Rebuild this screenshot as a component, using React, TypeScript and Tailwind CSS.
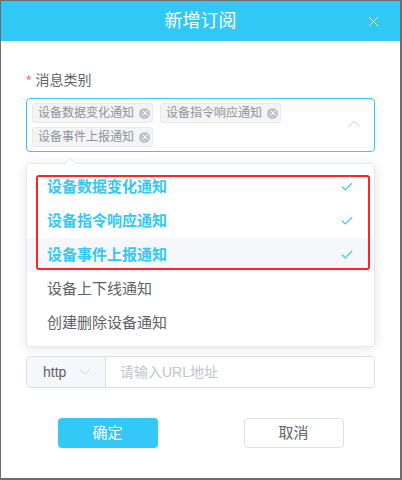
import { X, Check, ChevronUp, ChevronDown } from 'lucide-react';

const FONT = { fontFamily: '"Liberation Sans", "Noto Sans CJK SC", sans-serif' };

const tags = ['设备数据变化通知', '设备指令响应通知', '设备事件上报通知'];
const options = [
  { label: '设备数据变化通知', on: true },
  { label: '设备指令响应通知', on: true },
  { label: '设备事件上报通知', on: true, hover: true },
  { label: '设备上下线通知', on: false },
  { label: '创建删除设备通知', on: false },
];

function Tag({ text }: { text: string }) {
  return (
    <span className="flex h-[20px] items-center rounded-[3px] border border-[#e9e9eb] bg-[#f4f4f5] pl-[5px] pr-[2px] text-[12px] text-[#909399]">
      {text}
      <span className="ml-[5px] flex h-[11px] w-[11px] items-center justify-center rounded-full bg-[#c0c4cc]">
        <X size={8} strokeWidth={3} color="#ffffff" />
      </span>
    </span>
  );
}

export default function App() {
  return (
    <div className="h-[480px] w-[402px] bg-[#6d6d6d] pb-[2px] pl-px pr-[2px] pt-px" style={FONT}>
      <div className="flex h-full flex-col bg-white">
        <div className="relative flex h-10 items-center justify-center bg-[#32c8f6] text-[18px] text-white">
          新增订阅
          <X size={17} strokeWidth={1.4} className="absolute right-[18px] top-[12px]" />
        </div>

        <div className="px-[25px] pt-[29px]">
          <div className="flex h-5 items-center text-[14px] text-[#606266]">
            <span className="mr-[4px] text-[#f56c6c]">*</span>消息类别
          </div>

          <div className="relative mt-2">
            <div className="relative flex h-[54px] flex-wrap content-start gap-x-[7px] gap-y-[4px] rounded-[4px] border border-[#33c8f6] pl-[5px] pt-[4px]">
              {tags.map((t) => (
                <Tag key={t} text={t} />
              ))}
              <ChevronUp
                size={22}
                strokeWidth={1}
                color="#c0c4cc"
                className="absolute right-[9px] top-[14px]"
              />
            </div>

            {/* 下拉面板 */}
            <div className="absolute left-0 right-0 top-[65px] z-10 rounded-[4px] border border-[#e4e7ed] bg-white py-[6px] shadow-[0_2px_12px_0_rgba(0,0,0,0.1)]">
              <div className="absolute left-[37px] top-[-6px] h-0 w-0 border-x-[6px] border-b-[6px] border-x-transparent border-b-[#e4e7ed]" />
              <div className="absolute left-[38px] top-[-5px] h-0 w-0 border-x-[5px] border-b-[5px] border-x-transparent border-b-white" />
              {options.map((o) => (
                <div
                  key={o.label}
                  className={`flex h-[34px] items-center justify-between pl-[20px] pr-[20px] text-[15px] ${
                    o.on ? 'font-bold text-[#33c8f6]' : 'text-[#606266]'
                  } ${o.hover ? 'bg-[#f5f7fa]' : ''}`}
                >
                  {o.label}
                  {o.on && <Check size={14} strokeWidth={2} color="#33c8f6" />}
                </div>
              ))}
              <div className="pointer-events-none absolute left-[9px] top-[11px] h-[95px] w-[334px] rounded-[3px] border-2 border-[#ff2323]" />
            </div>
          </div>

          <div className="mt-[204px] flex h-[32px] rounded-[4px] border border-[#dcdfe6] text-[14px]">
            <div className="flex w-[79px] items-center justify-between rounded-l-[4px] border-r border-[#dcdfe6] bg-[#f5f7fa] pl-[16px] pr-[11px] text-[#606266]">
              http
              <ChevronDown size={18} strokeWidth={1} color="#c0c4cc" />
            </div>
            <div className="flex items-center pl-[14px] text-[#c0c4cc]">请输入URL地址</div>
          </div>
        </div>

        <div className="mt-[30px] flex justify-center gap-[86px]">
          <button className="h-[30px] w-[100px] rounded-[4px] bg-[#33c8f6] text-[15px] text-white">
            确定
          </button>
          <button className="h-[30px] w-[100px] rounded-[4px] border border-[#dcdfe6] bg-white text-[15px] text-[#606266]">
            取消
          </button>
        </div>
      </div>
    </div>
  );
}
